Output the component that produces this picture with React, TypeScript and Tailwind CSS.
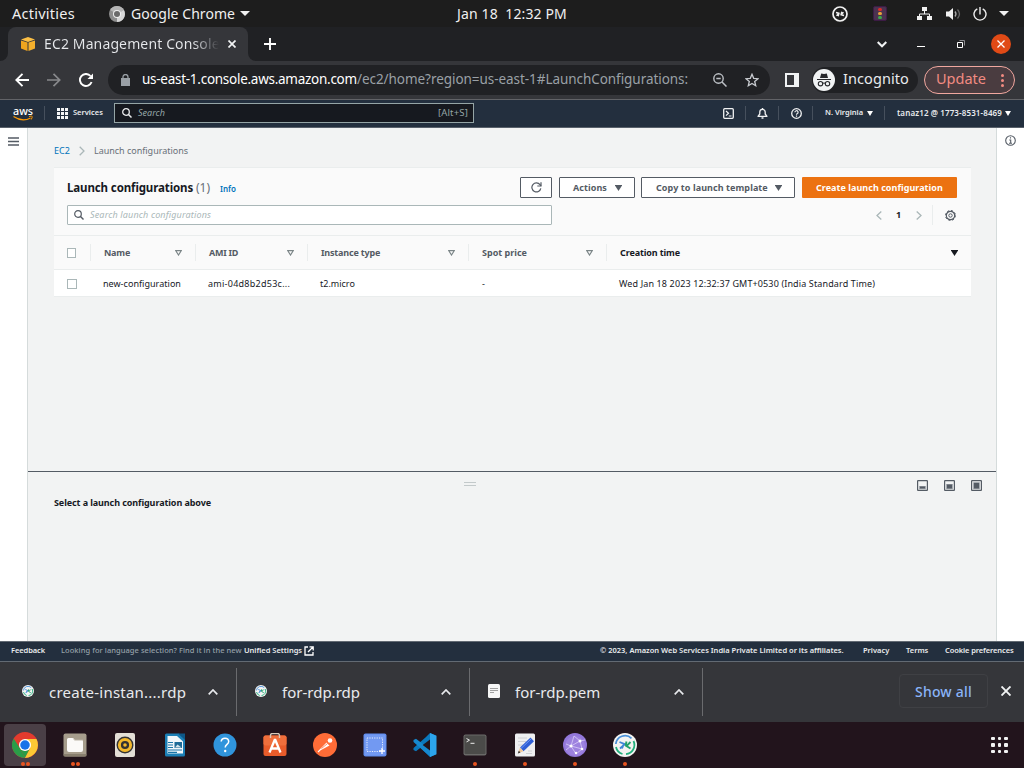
import React from 'react';

type TProps = { c: string; children: React.ReactNode };
const T = ({ c, children }: TProps) => (
  <span className={`block shrink-0 whitespace-pre ${c}`}>{children}</span>
);

const Svg = ({ c, v, children }: { c: string; v: string; children: React.ReactNode }) => (
  <svg className={`block shrink-0 ${c}`} viewBox={v} fill="none">{children}</svg>
);

const Remote = ({ c }: { c: string }) => (
  <Svg c={c} v="0 0 24 24">
    <circle cx="12" cy="12" r="12" fill="#f4f4f2" />
    <path d="M2.800 11A9.300 9.300 0 0 1 18.500 5.300" stroke="#4a90d9" strokeWidth="1.800" />
    <path d="M20.500 8A9.300 9.300 0 0 1 13 21.200M9.500 21A9.300 9.300 0 0 1 3 14" stroke="#22b07d" strokeWidth="1.800" />
    <path d="M6.500 9l4.500 1.800L9 15.500M12 10.800L7 15.500" stroke="#3f86d6" strokeWidth="1.800" />
    <path d="M17.500 9L13.500 13l4 2.500M13.500 8.500l-1 4.500" stroke="#22a06b" strokeWidth="1.900" />
  </Svg>
);

const TopBar = () => (
  <header className="flex h-[27px] items-center bg-[#1d1d1d] text-[14px] text-[#f0f0f0]">
    <T c="ml-3 w-[63px] text-[14.500px] tracking-[0.250px]">Activities</T>
    <Svg c="ml-[34px] h-4 w-4" v="0 0 16 16">
      <circle cx="8" cy="8" r="8" fill="#8d8d8d" />
      <path d="M8 8 1.100 4A8 8 0 0 1 14.900 4z" fill="#b4b4b4" />
      <path d="M8 8l6.900-4A8 8 0 0 1 8 16z" fill="#d6d6d6" />
      <circle cx="8" cy="8" r="4" fill="#eee" />
      <circle cx="8" cy="8" r="3" fill="#6a6a6a" />
    </Svg>
    <T c="ml-[6px] w-[104px] tracking-[0.050px]">Google Chrome</T>
    <Svg c="ml-[5px] h-[5px] w-[10px]" v="0 0 10 5"><path d="M0 0h10L5 5z" fill="#f0f0f0" /></Svg>
    <T c="ml-[207px] w-[110px] pb-px tracking-[0.130px]">Jan 18  12:32 PM</T>
    <Svg c="ml-[265px] h-4 w-4" v="0 0 16 16">
      <circle cx="8" cy="8" r="7" stroke="#f0f0f0" strokeWidth="1.700" />
      <path d="M4 6.500l3 .8-.8 3M7.200 7L4.500 9.800M12 9.500l-3-.8.8-3M8.800 9l2.700-2.800" stroke="#f0f0f0" strokeWidth="1.400" />
    </Svg>
    <div className="ml-[25px] flex h-[15px] w-[14px] flex-col items-center justify-center gap-[1px] rounded-[2px] border border-[#3c1b45] bg-[#4b3350]">
      <i className="h-[3px] w-1 rounded-full bg-[#d92b2b]" />
      <i className="h-[3px] w-1 rounded-full bg-[#e8a33a]" />
      <i className="h-[3px] w-1 rounded-full bg-[#3da84a]" />
    </div>
    <Svg c="ml-[30px] h-[14px] w-[15px]" v="0 0 15 14">
      <path d="M5 0h5v4H5zM0 9h5v4H0zM10 9h5v4h-5z" fill="#f0f0f0" />
      <path d="M7.500 4v3M2.500 9V7h10v2" stroke="#f0f0f0" />
    </Svg>
    <Svg c="ml-[14px] h-[14px] w-[15px]" v="0 0 15 14">
      <path d="M0 4.500h3L7 1v12L3 9.500H0z" fill="#f0f0f0" />
      <path d="M9 4.500q2 2.500 0 5" stroke="#aaa" strokeWidth="1.300" />
      <path d="M11.500 2.500q4 4.500 0 9" stroke="#666" strokeWidth="1.300" />
    </Svg>
    <Svg c="ml-[12px] h-[14px] w-[14px]" v="0 0 14 14">
      <path d="M4.300 1.800a6 6 0 1 0 5.400 0M7 0v7.500" stroke="#f0f0f0" strokeWidth="1.400" />
    </Svg>
    <Svg c="ml-[12px] h-[5px] w-[10px]" v="0 0 10 5"><path d="M0 0h10L5 5z" fill="#f0f0f0" /></Svg>
  </header>
);

const TabStrip = () => (
  <div className="flex h-[34px] items-center bg-[#202124]">
    <div className="flex h-[34px] w-2 items-end bg-[#35363a]"><div className="h-full w-2 rounded-br-lg bg-[#202124]" /></div>
    <div className="flex h-[34px] w-[240px] items-center rounded-t-lg bg-[#35363a]">
      <Svg c="ml-3 h-4 w-4" v="0 0 16 16">
        <path d="M1 3.500L8 1l7 2.500L8 6z" fill="#fbbf45" />
        <path d="M1 4.500l6.500 2V15L1 12.500z" fill="#f0a51e" />
        <path d="M15 4.500l-6.500 2V15l6.500-2.500z" fill="#f5b02c" />
      </Svg>
      <T c="ml-2 w-[175px] overflow-hidden bg-linear-to-r from-[#e8eaed] from-85% to-[#e8eaed00] bg-clip-text pb-[2px] text-[14px] tracking-[0.130px] text-transparent">EC2 Management Console</T>
      <Svg c="ml-[9px] h-[8px] w-[8px]" v="0 0 8 8"><path d="M.5.5l7 7M7.500.500l-7 7" stroke="#f1f3f4" strokeWidth="1.700" /></Svg>
    </div>
    <div className="h-[34px] w-2 bg-[#35363a]"><div className="h-full w-2 rounded-bl-lg bg-[#202124]" /></div>
    <Svg c="ml-[8px] h-3 w-3" v="0 0 12 12"><path d="M6 0v12M0 6h12" stroke="#fff" strokeWidth="1.900" /></Svg>
    <Svg c="ml-[601px] h-[7px] w-[10px]" v="0 0 10 7"><path d="M.7 1L5 5.300 9.300 1" stroke="#f1f3f4" strokeWidth="2" /></Svg>
    <i className="mt-[5px] ml-[30px] h-px w-2 bg-white" />
    <Svg c="ml-[32px] h-2 w-2" v="0 0 8 8"><path d="M2.500.500h5v5" stroke="#8c8d90" /><path d="M.5 2.500h5v5h-5z" stroke="#fff" /></Svg>
    <div className="ml-[26px] flex h-5 w-5 items-center justify-center rounded-full bg-[#e04a16]">
      <Svg c="h-[8px] w-[8px]" v="0 0 8 8"><path d="M.5.5l7 7M7.500.500l-7 7" stroke="#fff" strokeWidth="1.300" /></Svg>
    </div>
  </div>
);

const Toolbar = () => (
  <div className="flex h-[39px] items-center border-b border-[#626367] bg-[#35363a]">
    <Svg c="ml-[15px] h-[14px] w-[14px]" v="0 0 14 14"><path d="M14 7H1.500M7.500.800L1.300 7l6.200 6.200" stroke="#fff" strokeWidth="1.900" /></Svg>
    <Svg c="ml-[18px] h-[14px] w-[14px]" v="0 0 14 14"><path d="M0 7h12.500M6.500.800L12.700 7l-6.200 6.200" stroke="#88898c" strokeWidth="1.700" /></Svg>
    <Svg c="ml-[18px] h-[14px] w-[14px]" v="0 0 14 14"><path d="M12.600 9A6 6 0 1 1 11.500 3" stroke="#fff" strokeWidth="1.900" /><path d="M14 .5V6H8.500z" fill="#fff" /></Svg>
    <div className="ml-[15px] flex h-[30px] w-[662px] items-center rounded-full bg-[#202124] text-[13.500px]">
      <Svg c="ml-[13px] h-3 w-[9px]" v="0 0 9 12"><path d="M0 4h9v8H0z" fill="#9aa0a6" /><path d="M2 5V3a2.500 2.500 0 0 1 5 0v2" stroke="#9aa0a6" strokeWidth="1.300" /></Svg>
      <T c="ml-3 w-[215px] pb-px tracking-[-0.270px] text-white">us-east-1.console.aws.amazon.com</T>
      <T c="w-[331px] pb-px tracking-[-0.055px] text-[#9aa0a6]">/ec2/home?region=us-east-1#LaunchConfigurations:</T>
      <Svg c="ml-[25px] h-[14px] w-[14px]" v="0 0 14 14"><circle cx="5.500" cy="5.500" r="4.700" stroke="#bdc1c6" strokeWidth="1.400" /><path d="M9 9l4.500 4.500M3.300 5.500h4.400" stroke="#bdc1c6" strokeWidth="1.500" /></Svg>
      <Svg c="ml-[18px] h-[14px] w-[14px]" v="0 0 14 14"><path d="M7 1.300l1.700 4 4.300.400-3.300 2.800 1 4.200L7 10.500l-3.700 2.200 1-4.200L1 5.700l4.300-.4z" stroke="#c9ccd1" strokeWidth="1.300" /></Svg>
    </div>
    <Svg c="ml-[15px] h-[14px] w-[14px]" v="0 0 14 14"><path d="M0 0h14v14H0zM2 2v10h7V2z" fill="#f1f3f4" fillRule="evenodd" /></Svg>
    <div className="ml-[13px] flex h-[26px] w-[106px] items-center rounded-full bg-[#202124]">
      <Svg c="ml-px h-[22px] w-[22px]" v="0 0 22 22">
        <circle cx="11" cy="11" r="11" fill="#f1f3f4" />
        <path d="M7 9l1.200-4.500 2.800.6 2.800-.6L15 9zM4 10h14v1H4z" fill="#27282c" />
        <circle cx="7.500" cy="14.700" r="2.200" stroke="#27282c" strokeWidth="1.100" /><circle cx="14.500" cy="14.700" r="2.200" stroke="#27282c" strokeWidth="1.100" />
        <path d="M9.700 14.300q1.300-.6 2.600 0" stroke="#27282c" />
      </Svg>
      <T c="ml-2 w-[66px] pb-[2px] text-[14.500px] tracking-[0.080px] text-[#e8eaed]">Incognito</T>
    </div>
    <div className="ml-[6px] flex h-7 w-[91px] items-center rounded-full border border-[#f0a79f] bg-[#4a3c40]">
      <T c="ml-[11px] w-[50px] pb-[2px] text-[14.500px] text-[#f28b82]">Update</T>
      <div className="ml-[15px] flex flex-col gap-[2px]">
        <i className="h-[3px] w-[3px] rounded-full bg-[#f28b82]" /><i className="h-[3px] w-[3px] rounded-full bg-[#f28b82]" /><i className="h-[3px] w-[3px] rounded-full bg-[#f28b82]" />
      </div>
    </div>
  </div>
);

const NavSep = ({ c }: { c: string }) => <i className={`h-[14px] w-px shrink-0 bg-[#46505d] ${c}`} />;

const AwsNav = () => (
  <nav className="flex h-[28px] items-center border-b border-[#59616b] bg-[#232f3e] pb-px text-[7.500px] font-semibold text-[#e9ebed]">
    <Svg c="ml-[13px] h-[15px] w-5 overflow-visible" v="0 0 20 15">
      <text x="0" y="8.500" fontSize="11" fontWeight="500" textLength="20" lengthAdjust="spacingAndGlyphs" fill="#fff" fontFamily="Noto Sans, sans-serif">aws</text>
      <path d="M.5 10.500q9 6 17 1.500" stroke="#f90" strokeWidth="1.200" /><path d="M16 10.500q3-.8 3.200 0t-1 3" stroke="#f90" />
    </Svg>
    <NavSep c="ml-[11px]" />
    <div className="ml-[12px] grid grid-cols-3 gap-[1px]">
      {[0, 1, 2, 3, 4, 5, 6, 7, 8].map((i) => <i key={i} className="h-[3px] w-[3px] bg-[#f4f5f6]" />)}
    </div>
    <T c="ml-[5px] w-[30px]">Services</T>
    <div className="ml-[11px] flex h-5 w-[360px] items-center border border-[#95a5a6] bg-[#16191f] font-normal text-[#95a5a6]">
      <Svg c="ml-[7px] h-[10px] w-[10px]" v="0 0 10 10"><circle cx="4" cy="4" r="3.300" stroke="#e9ebed" strokeWidth="1.300" /><path d="M6.500 6.500l3 3" stroke="#e9ebed" strokeWidth="1.500" /></Svg>
      <T c="ml-[6px] w-[27px] text-[9px] italic">Search</T>
      <T c="ml-[273px] w-[30px] text-[9.500px] tracking-[0.150px]">[Alt+S]</T>
    </div>
    <Svg c="ml-[249px] h-[11px] w-[11px]" v="0 0 11 11"><rect x=".7" y=".7" width="9.600" height="9.600" rx="1" stroke="#f1f2f3" strokeWidth="1.300" /><path d="M3 3l2.500 2.300L3 7.600M5.800 8H8.500" stroke="#f1f2f3" strokeWidth="1.200" /></Svg>
    <NavSep c="ml-[11px]" />
    <Svg c="ml-[11px] h-[11px] w-[11px]" v="0 0 11 11"><path d="M1 8.300h9L8.200 6V4a2.700 2.700 0 0 0-5.400 0v2z" stroke="#f1f2f3" strokeWidth="1.300" strokeLinejoin="round" /><path d="M5.500 0v1.500M4.500 10h2" stroke="#f1f2f3" strokeWidth="1.400" /></Svg>
    <NavSep c="ml-[10px]" />
    <Svg c="ml-[12px] h-[11px] w-[11px]" v="0 0 11 11"><circle cx="5.500" cy="5.500" r="4.800" stroke="#f1f2f3" strokeWidth="1.300" /><path d="M3.900 4.300a1.600 1.600 0 1 1 2.200 1.500q-.6.300-.6 1M5.500 7.500v1.200" stroke="#f1f2f3" strokeWidth="1.200" /></Svg>
    <NavSep c="ml-[10px]" />
    <T c="ml-[12px] w-[38px]">N. Virginia</T>
    <Svg c="ml-[4px] h-[5px] w-[6px]" v="0 0 6 5"><path d="M0 0h6L3 5z" fill="#fff" /></Svg>
    <NavSep c="ml-[11px]" />
    <T c="ml-[12px] w-[105px] text-[8px] tracking-[0.120px]">tanaz12 @ 1773-8531-8469</T>
    <Svg c="ml-[3px] h-[5px] w-[6px]" v="0 0 6 5"><path d="M0 0h6L3 5z" fill="#fff" /></Svg>
  </nav>
);

const Sort = ({ c }: { c: string }) => (
  <Svg c={`h-[6px] w-[7px] ${c}`} v="0 0 7 6"><path d="M.8.700h5.400L3.500 5z" stroke="#7b8587" strokeWidth="1.200" /></Svg>
);
const Down = ({ c }: { c: string }) => (
  <Svg c={`h-[6px] w-[7px] ${c}`} v="0 0 7 6"><path d="M0 0h7v.5L3.500 6 0 .5z" fill="currentColor" /></Svg>
);
const ColSep = ({ c }: { c: string }) => <i className={`h-[17px] w-px shrink-0 bg-[#eaeded] ${c}`} />;

const Panel = () => (
  <section className="ml-[26px] w-[917px] border-y border-[#eaeded] bg-[#fafafa] text-[9px] text-[#16191f]">
    <div className="flex h-[68px] flex-col border-b border-[#eaeded]">
      <div className="mt-[9px] flex h-[21px] items-center">
        <T c="ml-[13px] w-[126px] text-[11.500px] font-bold tracking-[-0.120px]">Launch configurations</T>
        <T c="ml-[3px] w-[14px] text-[12px] text-[#687078]">(1)</T>
        <T c="mt-[3px] ml-[10px] w-[16px] text-[8px] font-semibold text-[#0073bb]">Info</T>
        <button className="ml-[284px] flex h-[21px] w-8 items-center justify-center rounded-[1px] border border-[#545b64] bg-white">
          <Svg c="h-[11px] w-[11px]" v="0 0 11 11"><path d="M9.800 6.300A4.500 4.500 0 1 1 9 2.700L10 4" stroke="#545b64" strokeWidth="1.200" /><path d="M10 .3V4H6.300" stroke="#545b64" strokeWidth="1.200" /></Svg>
        </button>
        <button className="ml-[7px] flex h-[21px] w-[76px] items-center rounded-[1px] border border-[#545b64] bg-white font-bold text-[#545b64]">
          <T c="ml-[13px] w-[34px] text-left tracking-[0.060px]">Actions</T><Down c="ml-2" />
        </button>
        <button className="ml-[6px] flex h-[21px] w-[154px] items-center rounded-[1px] border border-[#545b64] bg-white font-bold text-[#545b64]">
          <T c="ml-[14px] w-[112px] text-left tracking-[0.080px]">Copy to launch template</T><Down c="ml-[7px]" />
        </button>
        <button className="ml-[7px] flex h-[21px] w-[155px] items-center rounded-[1px] bg-[#ec7211] font-bold text-white">
          <T c="ml-[14px] w-[127px] text-left tracking-[0.040px]">Create launch configuration</T>
        </button>
      </div>
      <div className="mt-[7px] flex h-5 items-center">
        <div className="ml-[13px] flex h-5 w-[485px] items-center rounded-[1px] border border-[#aab7b8] bg-white">
          <Svg c="ml-[6px] h-[10px] w-[10px]" v="0 0 10 10"><circle cx="4" cy="4" r="3.300" stroke="#545b64" strokeWidth="1.200" /><path d="M6.500 6.500l3 3" stroke="#545b64" strokeWidth="1.400" /></Svg>
          <T c="ml-[6px] w-[121px] tracking-[0.160px] text-[#aab7b8] italic">Search launch configurations</T>
        </div>
        <Svg c="ml-[324px] h-[9px] w-[6px]" v="0 0 6 9"><path d="M5.300.500L1 4.500l4.300 4" stroke="#aab7b8" strokeWidth="1.300" /></Svg>
        <T c="ml-[14px] w-[5px] font-bold">1</T>
        <Svg c="ml-[15px] h-[9px] w-[6px]" v="0 0 6 9"><path d="M.7.500L5 4.500l-4.300 4" stroke="#aab7b8" strokeWidth="1.300" /></Svg>
        <i className="ml-[10px] h-5 w-px bg-[#eaeded]" />
        <Svg c="ml-[12px] h-[11px] w-[11px]" v="0 0 11 11"><circle cx="5.500" cy="5.500" r="4.200" stroke="#545b64" strokeWidth="1.200" /><circle cx="5.500" cy="5.500" r="5" stroke="#545b64" strokeWidth="1" strokeDasharray="1.960 1.960" /><circle cx="5.500" cy="5.500" r="1.700" stroke="#545b64" /></Svg>
      </div>
    </div>
    <div className="flex h-[34px] items-center border-b border-[#eaeded] font-bold text-[#545b64]">
      <i className="ml-[13px] h-[10px] w-[9px] border border-[#aab7b8] bg-white" />
      <ColSep c="ml-[14px]" />
      <T c="ml-[13px] w-[26px] tracking-[-0.200px]">Name</T><Sort c="ml-[45px]" /><ColSep c="ml-[13px]" />
      <T c="ml-[13px] w-[29px] tracking-[-0.250px]">AMI ID</T><Sort c="ml-[49px]" /><ColSep c="ml-[13px]" />
      <T c="ml-[13px] w-[59px] tracking-[-0.180px]">Instance type</T><Sort c="ml-[68px]" /><ColSep c="ml-[13px]" />
      <T c="ml-[13px] w-[45px]">Spot price</T><Sort c="ml-[59px]" /><ColSep c="ml-[13px]" />
      <T c="ml-[13px] w-[60px] tracking-[-0.120px] text-[#16191f]">Creation time</T><Down c="ml-[271px] text-[#16191f]" />
    </div>
    <div className="flex h-[26px] items-center bg-white pt-px">
      <i className="ml-[13px] h-[10px] w-[10px] border border-[#aab7b8] bg-white" />
      <T c="ml-[26px] w-[78px] tracking-[0.030px]">new-configuration</T>
      <T c="ml-[27px] w-[82px] tracking-[0.260px]">ami-04d8b2d53c...</T>
      <T c="ml-[30px] w-[35px]">t2.micro</T>
      <T c="ml-[127px] w-[3px]">-</T>
      <T c="ml-[134px] w-[256px] tracking-[0.130px]">Wed Jan 18 2023 12:32:37 GMT+0530 (India Standard Time)</T>
    </div>
  </section>
);

const PaneIcon = ({ c, y }: { c: string; y: number }) => (
  <Svg c={`h-[11px] w-[11px] ${c}`} v="0 0 11 11">
    <rect x=".6" y=".6" width="9.800" height="9.800" rx=".5" fill="#f2f3f3" stroke="#545b64" strokeWidth="1.200" />
    <path d={`M2 ${y - 0.5}h7V9.300H2z`} fill="#a5aab0" />
    <path d={`M3 ${y}h5V8.500H3z`} fill="#545b64" />
  </Svg>
);

const Main = () => (
  <main className="flex h-[513px] bg-[#f2f3f3]">
    <aside className="w-7 border-r border-[#d5dbdb] bg-white pt-[9px] pl-2">
      <Svg c="h-[9px] w-[11px]" v="0 0 11 9"><path d="M0 1h11M0 4.500h11M0 8h11" stroke="#545b64" strokeWidth="1.400" /></Svg>
    </aside>
    <div className="flex w-[968px] flex-col">
      <div className="flex h-[39px] items-center pt-[6px] text-[9px]">
        <T c="ml-[26px] w-4 text-[#0073bb]">EC2</T>
        <Svg c="ml-[9px] h-[10px] w-[6px]" v="0 0 6 10"><path d="M.7.700L5 5 .7 9.300" stroke="#aab7b8" strokeWidth="1.300" /></Svg>
        <T c="ml-[9px] w-[94px] tracking-[-0.020px] text-[#687078]">Launch configurations</T>
      </div>
      <Panel />
      <div className="h-[174px]" />
      <div className="flex h-[170px] flex-col border-t border-[#545b64]">
        <div className="flex items-start pt-2">
          <div className="mt-[2px] ml-[436px] h-[4px] w-3 border-y border-[#c3c9ca]" />
          <PaneIcon c="ml-[441px]" y={6.5} /><PaneIcon c="ml-4" y={4.5} /><PaneIcon c="ml-4" y={2.8} />
        </div>
        <T c="mt-[5px] ml-[26px] w-[157px] text-[9px] font-bold tracking-[-0.090px] text-[#16191f]">Select a launch configuration above</T>
      </div>
    </div>
    <aside className="w-7 border-l border-[#d5dbdb] bg-white pt-[7px] pl-2">
      <Svg c="h-[11px] w-[11px]" v="0 0 11 11"><circle cx="5.500" cy="5.500" r="4.800" stroke="#545b64" strokeWidth="1.100" /><path d="M5.500 2.300v1.200M4.300 5h1.400v3M4 8.200h3" stroke="#545b64" strokeWidth="1.100" /></Svg>
    </aside>
  </main>
);

const Footer = () => (
  <footer className="flex h-[21px] items-center border-y border-[#626a73] bg-[#232f3e] pb-px text-[7.500px] font-semibold text-[#e9ebed]">
    <T c="ml-[11px] w-[34px] tracking-[-0.080px]">Feedback</T>
    <T c="ml-4 w-[181px] font-medium tracking-[0.060px] text-[#95a0a8]">Looking for language selection? Find it in the new</T>
    <T c="ml-[2px] w-[58px] tracking-[-0.020px]">Unified Settings</T>
    <Svg c="ml-[2px] h-[10px] w-[10px]" v="0 0 10 10"><path d="M4 1H1v8h8V6M5.500.800H9.200V4.500M9 1L4 6" stroke="#fff" strokeWidth="1.300" /></Svg>
    <T c="ml-[286px] w-[243px]">© 2023, Amazon Web Services India Private Limited or its affiliates.</T>
    <T c="ml-5 w-[26px]">Privacy</T>
    <T c="ml-[17px] w-[22px]">Terms</T>
    <T c="ml-[17px] w-[68px] tracking-[-0.100px]">Cookie preferences</T>
  </footer>
);

const Up = ({ c }: { c: string }) => (
  <Svg c={`h-[6px] w-[10px] ${c}`} v="0 0 10 6"><path d="M.7 5.300L5 1l4.300 4.300" stroke="#e8eaed" strokeWidth="1.700" /></Svg>
);
const DlSep = ({ c }: { c: string }) => <i className={`h-12 w-px shrink-0 bg-[#6a6b6e] ${c}`} />;

const Downloads = () => (
  <div className="flex h-[60px] items-center bg-[#35363a] text-[15px] text-[#e8eaed]">
    <Remote c="mb-[2px] ml-[22px] h-[12px] w-[12px]" />
    <T c="ml-[15px] w-[137px] tracking-[0.230px]">create-instan....rdp</T>
    <Up c="ml-[22px]" /><DlSep c="ml-[18px]" />
    <Remote c="mb-[2px] ml-[18px] h-[12px] w-[12px]" />
    <T c="ml-[15px] w-[78px]">for-rdp.rdp</T>
    <Up c="ml-[81px]" /><DlSep c="ml-[18px]" />
    <Svg c="mb-[2px] ml-[18px] h-[14px] w-3" v="0 0 12 14"><rect width="12" height="14" rx="1.500" fill="#f6f6f6" /><path d="M2 4.500h8M2 6.500h8M2 8.500h4" stroke="#a0a0a0" /></Svg>
    <T c="ml-[15px] w-[85px]">for-rdp.pem</T>
    <Up c="ml-[74px]" /><DlSep c="ml-[18px]" />
    <button className="mb-[2px] ml-[196px] flex h-[34px] w-[89px] items-center rounded border border-[#3f4044] font-medium text-[#8ab4f8]">
      <T c="ml-[15px] w-[57px] text-left text-[14px] tracking-[0.200px]">Show all</T>
    </button>
    <Svg c="mb-[2px] ml-[13px] h-[10px] w-[10px]" v="0 0 10 10"><path d="M.5.500l9 9M9.500.500l-9 9" stroke="#f1f3f4" strokeWidth="1.900" /></Svg>
  </div>
);

const Slot = ({ dots, active, children }: { dots: number; active?: boolean; children: React.ReactNode }) => (
  <div className="flex h-[46px] w-[50px] shrink-0 flex-col items-center pt-[2px]">
    <div className={`flex h-[42px] w-[42px] flex-col items-center rounded-[4px] pt-[9px] ${active ? 'bg-[#4a3f46]' : ''}`}>
      {children}
      <div className="mt-[5px] flex gap-[1px]">
        {Array.from({ length: dots }, (_, i) => <i key={i} className="h-1 w-1 rounded-full bg-[#e95420]" />)}
      </div>
    </div>
  </div>
);

const D = ({ children }: { children: React.ReactNode }) => <Svg c="h-6 w-6" v="0 0 24 24">{children}</Svg>;

const Dock = () => (
  <div className="flex h-[46px] items-center bg-[#22141c]">
    <Slot dots={2} active><Svg c="-m-px h-[26px] w-[26px]" v="0 0 24 24">
      <circle cx="12" cy="12" r="12" fill="#e33b2e" />
      <path d="M1.600 6l5.700 9L12 24A12 12 0 0 1 1.600 6z" fill="#2a9d48" />
      <path d="M7.300 15l4.700 2.600 4.300-2L12 24z" fill="#2a9d48" />
      <path d="M16.800 14.700L12 24A12 12 0 0 0 22.600 6.500H12z" fill="#fcc934" />
      <circle cx="12" cy="12" r="5.600" fill="#fff" /><circle cx="12" cy="12" r="4.400" fill="#1a73e8" />
    </Svg></Slot>
    <Slot dots={2}><D><rect x=".5" y=".5" width="23" height="23" rx="2" fill="#a69d8c" /><rect x=".5" y="21" width="23" height="2.500" rx="1" fill="#887f6e" /><path d="M4 6.500Q4 5 5.500 5H10l1.500 2h7q1.500 0 1.500 1.500V17q0 2-2 2H6q-2 0-2-2z" fill="#fbfaf8" /><path d="M10 5l1.500 2.300H20" stroke="#d5d0c6" /></D></Slot>
    <Slot dots={0}><D><rect x="2" y="0" width="20" height="24" rx="2" fill="#e3dfd6" /><circle cx="12" cy="12" r="8.500" fill="#333" /><circle cx="12" cy="12" r="5.600" stroke="#f3b82c" strokeWidth="3" /><circle cx="12" cy="12" r="1.800" fill="#f3b82c" /></D></Slot>
    <Slot dots={0}><D><path d="M2 2q0-1.500 1.500-1.500H16L22 6v16q0 1.500-1.500 1.500h-17Q2 23.500 2 22z" fill="#1b7fb6" /><path d="M4.500 3H14l6 5.500v12H4.500z" fill="#f1f7fa" /><path d="M15 .500h7V7z" fill="#0d5787" /><path d="M5 9.500h5M5 12h5M5 14.500h5M5 17h14M5 19.300h9" stroke="#1a75a8" strokeWidth="1.200" /><path d="M11.500 9h7.500v6h-7.500z" fill="#1e6b97" /><path d="M12 14.500l2.500-3 4 3z" fill="#d5e4ea" /></D></Slot>
    <Slot dots={0}><D><circle cx="12" cy="12" r="11.500" fill="#3094dc" /><path d="M8.200 8.500Q8.500 5.200 12 5.200t3.700 3.200c0 3-3.500 3-3.500 6.200" stroke="#fff" strokeWidth="1.500" /><circle cx="12.200" cy="18" r="1.200" fill="#fff" /></D></Slot>
    <Slot dots={0}><D><rect x=".5" y="2.500" width="23" height="20.500" rx="2" fill="#e95c2b" /><rect x=".5" y="2.500" width="23" height="10" rx="2" fill="#f06f3c" /><path d="M7.500 5V2.500q0-2 2-2h5q2 0 2 2V5" stroke="#d8c9b8" strokeWidth="1.400" /><path d="M6.500 19.500L11.700 7h.6l5.200 12.500M8 15.500h8" stroke="#fff" strokeWidth="2.300" /></D></Slot>
    <Slot dots={0}><D><circle cx="12" cy="12" r="12" fill="#ff6c37" /><path d="M6.500 17.500l7-7.500 3 2.500L9 16.500z" fill="#fff" /><circle cx="17" cy="7.500" r="2.300" fill="#fff" /><path d="M5 19l9-9" stroke="#fff" strokeWidth="1.100" /><path d="M8.500 15.500l6-5" stroke="#ff6c37" strokeWidth=".8" /></D></Slot>
    <Slot dots={0}><D><rect x=".5" y=".5" width="23" height="23" rx="2" fill="#5f8bed" /><rect x="1.500" y="1.500" width="21" height="21" rx="1.500" fill="#7299f2" /><rect x="4" y="5" width="15.500" height="13.500" stroke="#e7edfc" strokeDasharray="1.200 1.200" /><path d="M19 15v6M16 18h6" stroke="#fff" strokeWidth="1.300" /></D></Slot>
    <Slot dots={0}><D><path d="M17 0l6 2.800v18.400L17 24 7.500 14.700 3 18.200.500 17V15L13 4z" fill="#0a78bd" /><path d="M.5 9V7L3 5.800l14.500 11V24L.5 9z" fill="#1688cf" /><path d="M17 0l6.500 2.800v18.400L17 24z" fill="#2ca5ec" /><path d="M17 6.500v11L9.700 12z" fill="#22141c" /><path d="M.5 9.500L3.200 12 .500 14.500z" fill="#22141c" /></D></Slot>
    <Slot dots={1}><D><rect x=".5" y="1.500" width="23" height="21" rx="2" fill="#6a6a68" /><rect x="1.500" y="2.500" width="21" height="18.500" rx="1" fill="#4b4b49" /><path d="M3.500 5.500l3 1.700-3 1.700M7.500 10.300h4" stroke="#eee" /></D></Slot>
    <Slot dots={1}><D><rect x="2" y=".5" width="20" height="23" rx="1.500" fill="#efeff1" /><path d="M5 5h9M5 8.500h8M5 12h5M15 18h4M13 20.500h6" stroke="#cfd0d4" /><path d="M7 14.500L17.500 4.500l3.500 3.800-10.500 10z" fill="#2f5fd6" /><path d="M7 14.500l3.500 3.800-5.500 2z" fill="#efc79a" /><path d="M5.800 17.800L4.800 20.500l2.700-1z" fill="#333" /><path d="M8 15.500l10-9.500" stroke="#6c94f2" /></D></Slot>
    <Slot dots={1}><D><circle cx="12" cy="12" r="12" fill="#9377da" /><circle cx="12" cy="13" r="10" fill="#a48be3" fillOpacity=".6" /><path d="M3 11l5 2 9-5 2 8-6 5M8 13l5 8M8 13L11 3l6 5 5-1M8 13l11 3M8 13l-5 4" stroke="#d9cdf6" strokeWidth=".8" /><circle cx="8" cy="13" r="1.500" fill="#fff" /><circle cx="17" cy="8" r="1.500" fill="#fff" /><circle cx="19" cy="16" r="1.300" fill="#fff" /><circle cx="13" cy="20" r="1.200" fill="#fff" /></D></Slot>
    <Slot dots={1}><Remote c="h-6 w-6" /></Slot>
    <div className="ml-[341px] grid grid-cols-3 gap-[3px]">
      {[0, 1, 2, 3, 4, 5, 6, 7, 8].map((i) => <i key={i} className="h-[3.500px] w-[3.500px] rounded-[1px] bg-[#f2f2f2]" />)}
    </div>
  </div>
);

export default function App() {
  return (
    <div className="h-[768px] w-[1024px] overflow-hidden font-['Noto_Sans',sans-serif]">
      <TopBar /><TabStrip /><Toolbar /><AwsNav /><Main /><Footer /><Downloads /><Dock />
    </div>
  );
}
